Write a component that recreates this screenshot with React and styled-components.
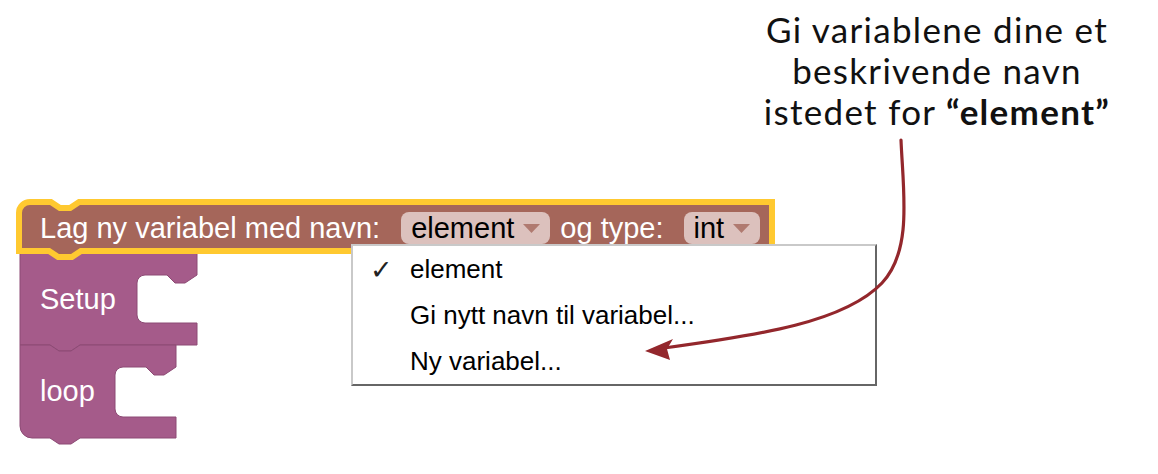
import React from "react";
import styled, { createGlobalStyle } from "styled-components";

const Global = createGlobalStyle`
  html, body { margin: 0; padding: 0; background: #fff; }
  body { font-family: "Liberation Sans", Arial, sans-serif; }
`;

const Page = styled.div`
  position: relative;
  width: 1158px;
  height: 474px;
  overflow: hidden;
  background: #fff;
`;

const Header = styled.header`
  display: flex;
  justify-content: flex-end;
  padding: 9px 21px 0 0;
`;

const Annotation = styled.p`
  margin: 0;
  width: 400px;
  text-align: center;
  font-family: Lato, "Open Sans", sans-serif;
  font-size: 35px;
  line-height: 41px;
  letter-spacing: 1.3px;
  color: #111;
  strong { font-weight: 700; }
`;

const Workspace = styled.div`
  display: flex;
  flex-direction: column;
  align-items: flex-start;
  margin-top: 73px;
  padding-left: 20px;
`;

const Shape = styled.svg`
  position: absolute;
  left: 0;
  top: 0;
  overflow: visible;
  pointer-events: none;
`;

const TopBlock = styled.div`
  position: relative;
  z-index: 2;
  margin-left: 2px;
  width: 747px;
  height: 43px;
`;

const Row = styled.div`
  position: relative;
  display: flex;
  align-items: center;
  height: 100%;
  box-sizing: border-box;
  padding: 3px 0 0 18px;
`;

const Label = styled.span`
  color: #fff;
  font-size: 29px;
  white-space: nowrap;
  margin-left: ${(p) => p.$gap || 0}px;
`;

const Pill = styled.span`
  display: inline-flex;
  align-items: center;
  gap: 9px;
  height: 32px;
  padding: 0 10px;
  margin-left: ${(p) => p.$gap || 0}px;
  border-radius: 8px;
  background: #dcc1bd;
  color: #000;
  font-size: 29px;
  white-space: nowrap;
`;

const Caret = () => (
  <svg width="17" height="9" viewBox="0 0 17 9">
    <path d="M0 0 H17 L8.5 9 Z" fill="#b07a70" />
  </svg>
);

const Menu = styled.div`
  position: absolute;
  left: 329px;
  top: 39px;
  z-index: 3;
  box-sizing: border-box;
  width: 526px;
  height: 142px;
  background: #fff;
  border-style: solid;
  border-width: 2px;
  border-color: #c9c9c9 #666 #666 #c9c9c9;
  display: flex;
  flex-direction: column;
`;

const MenuItem = styled.div`
  display: flex;
  align-items: center;
  height: 46px;
  padding-left: 17px;
  font-size: 26px;
  color: #000;
  white-space: nowrap;
`;

const Check = styled.span`
  display: inline-block;
  width: 40px;
  font-family: "DejaVu Sans", sans-serif;
  font-size: 27px;
  color: #222;
  visibility: ${(p) => (p.$on ? "visible" : "hidden")};
`;

const CBlock = styled.div`
  position: relative;
  width: ${(p) => p.$w}px;
  height: ${(p) => p.$h}px;
`;

const BlockLabel = styled.span`
  position: relative;
  display: flex;
  align-items: center;
  height: 100%;
  box-sizing: border-box;
  padding: ${(p) => p.$pt || 0}px 0 0 20px;
  color: #fff;
  font-size: 29px;
`;

const ArrowLayer = styled.svg`
  position: absolute;
  left: 0;
  top: 0;
  z-index: 5;
  pointer-events: none;
`;

const notchTop = "H30 l9,6 h12 l9,-6";
const notchBottom = "H60 l-9,6 h-12 l-9,-6";

function cPath(w, h, armTop, innerX, armBottom, roundBottom) {
  const r = 8;
  return [
    `M0,0 ${notchTop} H${w} V${armTop}`,
    `L${w - 12},${armTop + 8} L${w - 22},${armTop + 8} L${w - 30},${armTop}`,
    `H${innerX + r} A${r},${r} 0 0 0 ${innerX},${armTop + r}`,
    `V${armBottom - r} A${r},${r} 0 0 0 ${innerX + r},${armBottom}`,
    `H${w} V${h} ${notchBottom}`,
    roundBottom ? `H12 A12,12 0 0 1 0,${h - 12} Z` : "H0 Z",
  ].join(" ");
}

function PurpleBlock({ w, h, armTop, innerX, armBottom, roundBottom, label, pt }) {
  const d = cPath(w, h, armTop, innerX, armBottom, roundBottom);
  return (
    <CBlock $w={w} $h={h}>
      <Shape width={w} height={h}>
        <path d={d} fill="#a55b8a" stroke="#8c4a74" strokeWidth="1" />
      </Shape>
      <BlockLabel $pt={pt}>{label}</BlockLabel>
    </CBlock>
  );
}

export default function App() {
  const topD =
    "M0,8 A8,8 0 0 1 8,0 H28 l9,6 h12 l9,-6 H747 V43 H58 l-9,6 h-12 l-9,-6 H0 Z";
  return (
    <Page>
      <Global />
      <Header>
        <Annotation>
          Gi variablene dine et
          <br />
          beskrivende navn
          <br />
          istedet for <strong>“element”</strong>
        </Annotation>
      </Header>
      <Workspace>
        <TopBlock>
          <Shape width="747" height="43">
            <path d={topD} fill="none" stroke="#ffc930" strokeWidth="12" strokeLinejoin="miter" />
            <path d={topD} fill="#a5665a" />
          </Shape>
          <Row>
            <Label>Lag ny variabel med navn:</Label>
            <Pill $gap={21}>
              element
              <Caret />
            </Pill>
            <Label $gap={10}>og type:</Label>
            <Pill $gap={20}>
              int
              <Caret />
            </Pill>
          </Row>
          <Menu>
            <MenuItem>
              <Check $on>✓</Check>element
            </MenuItem>
            <MenuItem>
              <Check>✓</Check>Gi nytt navn til variabel...
            </MenuItem>
            <MenuItem>
              <Check>✓</Check>Ny variabel...
            </MenuItem>
          </Menu>
        </TopBlock>
        <PurpleBlock w={177} h={97} armTop={27} innerX={117} armBottom={75} label="Setup" pt={6} />
        <PurpleBlock w={156} h={93} armTop={22} innerX={95} armBottom={72} roundBottom label="loop" pt={0} />
      </Workspace>
      <ArrowLayer width="1158" height="474" viewBox="0 0 1158 474">
        <path
          d="M901,140 C903,190 913,250 882,283 C845,322 760,335 664,348"
          fill="none"
          stroke="#93272c"
          strokeWidth="3.2"
          strokeLinecap="round"
        />
        <path d="M645,351 L673,339 L667,349 L670,360 Z" fill="#93272c" />
      </ArrowLayer>
    </Page>
  );
}
